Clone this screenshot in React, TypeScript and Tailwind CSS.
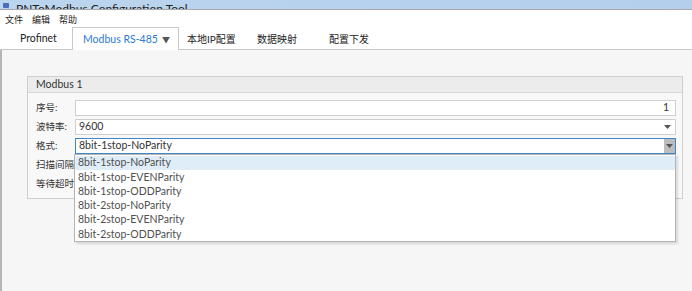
import React from "react";

const items = [
  "8bit-1stop-NoParity",
  "8bit-1stop-EVENParity",
  "8bit-1stop-ODDParity",
  "8bit-2stop-NoParity",
  "8bit-2stop-EVENParity",
  "8bit-2stop-ODDParity",
];

function Caret() {
  return (
    <svg width="7" height="4" viewBox="0 0 7 4" className="block">
      <path d="M0 0 H7 L3.5 4 Z" fill="#555" />
    </svg>
  );
}

export default function App() {
  const font = { fontFamily: 'Lato,"Noto Sans CJK SC","Noto Sans",sans-serif' };
  return (
    <div
      className="w-[692px] h-[291px] overflow-hidden flex flex-col bg-white text-[#333] text-[10.5px] whitespace-nowrap"
      style={font}
    >
      {/* title bar */}
      <div className="h-[10px] shrink-0 overflow-hidden bg-gradient-to-r from-[#bcd5ee] via-[#b7d2ee] to-[#b3cfec] flex items-end border-b border-[#a9a9a9]">
        <div className="flex items-end gap-[7px] pl-[3px] h-[9px] overflow-hidden">
          <div className="w-[6px] h-[5px] bg-[#4a6fb8] rounded-[1px] mb-[1px]" />
          <span className="text-[12px] leading-[9px] h-[9px] text-[#222] flex items-end">
            <span className="mb-[-4px]">PNToModbus Configuration Tool</span>
          </span>
        </div>
      </div>
      {/* menu bar */}
      <div className="h-[17px] shrink-0 flex items-center gap-[9px] pl-[5px] pt-[2px] text-[9px] text-[#222]">
        <span>文件</span>
        <span>编辑</span>
        <span>帮助</span>
      </div>
      {/* tab bar */}
      <div className="h-[23px] shrink-0 flex items-end border-b border-[#c9c9c9]">
        <div className="h-[22px] w-[72px] flex items-center pl-[20px] pt-[2px] text-[10.5px] text-[#222]">Profinet</div>
        <div className="h-[23px] w-[107px] mb-[-1px] bg-white border border-b-0 border-[#c9c9c9] flex items-center pl-[10px] pt-[2px] text-[#2c7ad0]">
          <span className="text-[10.5px] w-[70px]">Modbus RS-485</span>
          <span className="ml-[9px] text-[#555] text-[8px]">▼</span>
        </div>
        <div className="h-[22px] flex items-center pl-[8px] pt-[2px] w-[78px] text-[10px] text-[#222]">本地IP配置</div>
        <div className="h-[22px] flex items-center pt-[2px] w-[72px] text-[10px] text-[#222]">数据映射</div>
        <div className="h-[22px] flex items-center pt-[2px] text-[10px] text-[#222]">配置下发</div>
      </div>
      {/* content */}
      <div className="flex-1 bg-[#f6f6f6] border-l-2 border-[#b5b5b5] pt-[26px] pl-[25px] pr-[9px] relative">
        <div className="border border-[#cfcfcf] bg-[#f8f8f8] w-[656px]">
          <div className="h-[16px] bg-[#ececec] border-b border-[#d6d6d6] flex items-center pl-[8px] text-[10.5px] text-[#333]">
            Modbus 1
          </div>
          <div className="flex flex-col gap-[3px] pt-[7px] pb-[6px] pl-[8px] pr-[6px]">
            <div className="flex items-center h-[16px]">
              <span className="w-[39px] text-[9.5px] pt-[1px]">序号:</span>
              <div className="flex-1 h-[16px] bg-white border border-[#cfcfcf] flex items-center justify-end pr-[6px] text-[10.5px]">1</div>
            </div>
            <div className="flex items-center h-[16px]">
              <span className="w-[39px] text-[9.5px] pt-[1px]">波特率:</span>
              <div className="flex-1 h-[16px] bg-white border border-[#cfcfcf] flex items-center pl-[3px] pr-[4px] text-[10.5px]">
                <span className="flex-1">9600</span>
                <Caret />
              </div>
            </div>
            <div className="flex items-center h-[16px]">
              <span className="w-[39px] text-[9.5px] pt-[1px]">格式:</span>
              <div className="flex-1 h-[16px] bg-white border border-[#3f85c9] flex items-center pl-[3px] text-[10.5px]">
                <span className="flex-1">8bit-1stop-NoParity</span>
                <div className="w-[11px] h-full bg-[#bdbdbd] flex items-center justify-center">
                  <Caret />
                </div>
              </div>
            </div>
            <div className="flex items-center h-[16px]">
              <span className="w-[39px] text-[9.5px] pt-[1px]">扫描间隔:</span>
            </div>
            <div className="flex items-center h-[16px]">
              <span className="w-[39px] text-[9.5px] pt-[1px]">等待超时:</span>
            </div>
          </div>
        </div>
        {/* dropdown */}
        <div className="absolute left-[72px] top-[104px] w-[602px] h-[88px] bg-white border border-[#b4b4b4] shadow-[2px_2px_2px_rgba(0,0,0,0.12)] pt-[1px]">
          {items.map((it, i) => (
            <div
              key={it}
              className={
                "h-[14.3px] flex items-center pl-[3px] text-[10.5px] text-[#505050] " +
                (i === 0 ? "bg-[#deedf8]" : "")
              }
            >
              {it}
            </div>
          ))}
        </div>
      </div>
    </div>
  );
}
